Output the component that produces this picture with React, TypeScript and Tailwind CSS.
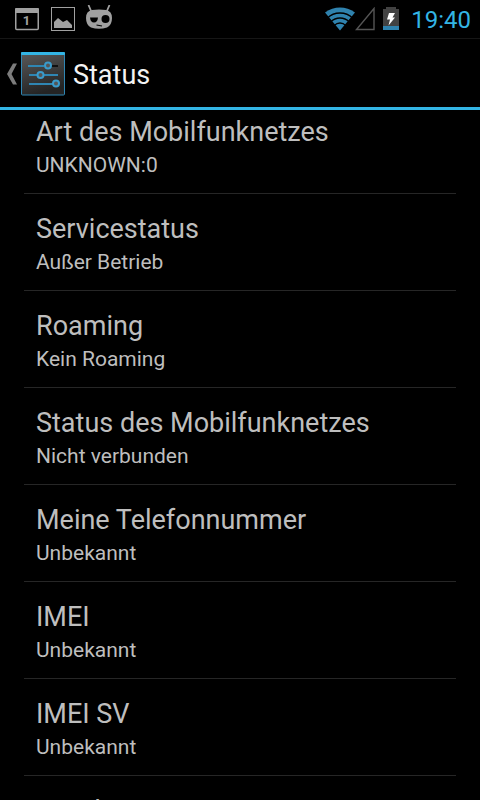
/* ============================================================
   Phone status screen
   Dark settings list with status bar and action bar
   ============================================================ */

const entries = [
  { title: "Art des Mobilfunknetzes", value: "UNKNOWN:0" },
  { title: "Servicestatus", value: "Außer Betrieb" },
  { title: "Roaming", value: "Kein Roaming" },
  { title: "Status des Mobilfunknetzes", value: "Nicht verbunden" },
  { title: "Meine Telefonnummer", value: "Unbekannt" },
  { title: "IMEI", value: "Unbekannt" },
  { title: "IMEI SV", value: "Unbekannt" },
  { title: "IP-Adresse", value: "Nicht verfügbar" },
];

function CalendarIcon() {
  return (
    <svg width="24" height="24" viewBox="0 0 24 24" aria-hidden="true">
      <rect x="0.750" y="2" width="22.500" height="20.500" rx="1" fill="none" stroke="#a0a0a0" strokeWidth="1.500" />
      <rect x="0" y="1" width="24" height="5" rx="1" fill="#a0a0a0" />
      <text x="11.500" y="18" textAnchor="middle" fontSize="13" fontWeight="700" fill="#a0a0a0">1</text>
    </svg>
  );
}

function PictureIcon() {
  return (
    <svg width="24" height="24" viewBox="0 0 24 24" aria-hidden="true">
      <rect x="0.500" y="0.500" width="23" height="23" fill="none" stroke="#a0a0a0" />
      <path d="M3 21V15L7 11L12 15L16 13L21 18V21Z" fill="#a0a0a0" />
    </svg>
  );
}

function MascotIcon() {
  return (
    <svg width="26" height="24" viewBox="0 0 26 24" aria-hidden="true">
      <path d="M2.500 0L5.500 7M23.500 0L20.500 7" stroke="#a0a0a0" strokeWidth="1.800" />
      <path d="M6 5Q13 4 20 5Q26 6 26 13Q26 20 21 22.500Q13 25 5 22.500Q0 20 0 13Q0 6 6 5Z" fill="#a0a0a0" />
      <path d="M4 12.500H12Q11.500 17.500 8 17.500Q4.500 17.500 4 12.500Z" fill="#000" />
      <circle cx="19.500" cy="14" r="4" fill="#000" />
      <path d="M10.500 20L16 21" stroke="#000" strokeWidth="1.200" />
    </svg>
  );
}

function WifiIcon() {
  return (
    <svg width="30" height="24" viewBox="0 0 30 24" aria-hidden="true">
      <path d="M15 0.500Q23 0.500 30 5.500L15 23.500L0 5.500Q7 0.500 15 0.500Z" fill="#2f82ae" />
      <g fill="none" stroke="#000" strokeWidth="1.300">
        <circle cx="15" cy="24" r="18" />
        <circle cx="15" cy="24" r="13" />
        <circle cx="15" cy="24" r="8" />
      </g>
    </svg>
  );
}

function SignalIcon() {
  return (
    <svg width="20" height="24" viewBox="0 0 20 24" aria-hidden="true">
      <path d="M19 1.500V22.500H1.500Z" fill="none" stroke="#555" strokeWidth="1.400" />
    </svg>
  );
}

function BatteryIcon() {
  return (
    <svg width="16" height="24" viewBox="0 0 16 24" aria-hidden="true">
      <path d="M3 0H13V2H16V19H0V2H3Z" fill="#424242" />
      <rect x="0" y="19" width="16" height="4" fill="#2f82ae" />
      <path d="M6 6H12L9.500 10.500H12L5.500 18.500L7 12.500H4Z" fill="#fff" />
    </svg>
  );
}

function BackIcon() {
  return (
    <svg width="10" height="22" viewBox="0 0 10 22" aria-hidden="true">
      <path d="M6 0.500H10L4.500 11L10 21.500H6L0 11Z" fill="#7c7c7c" />
    </svg>
  );
}

function SettingsIcon() {
  return (
    <svg width="44" height="44" viewBox="0 0 44 44" aria-hidden="true">
      <defs>
        <linearGradient id="plate" x1="0" y1="0" x2="0.300" y2="1">
          <stop offset="0" stopColor="#5a5a5a" />
          <stop offset="1" stopColor="#242424" />
        </linearGradient>
      </defs>
      <rect x="0.500" y="0.500" width="43" height="42.500" rx="1" fill="url(#plate)" stroke="#2f86b3" />
      <rect x="0" y="0" width="44" height="3" rx="1" fill="#33b5e5" />
      <g strokeWidth="2" stroke="#2f86b3">
        <path d="M7 14H23" />
        <path d="M30 14H37" stroke="#111" />
        <path d="M8 23H37" />
        <path d="M8 32H32" />
      </g>
      <g fill="#555" stroke="#3a9bcb" strokeWidth="2">
        <circle cx="27" cy="13.500" r="3" />
        <circle cx="19.500" cy="23" r="3" />
        <circle cx="35" cy="31.500" r="3" />
      </g>
    </svg>
  );
}

function StatusBar() {
  return (
    <div className="flex h-[38px] shrink-0 items-center justify-between pl-[15px] pr-[9px]">
      <div className="flex items-center">
        <CalendarIcon />
        <div className="ml-3 mr-[11px]">
          <PictureIcon />
        </div>
        <div className="pb-1">
          <MascotIcon />
        </div>
      </div>
      <div className="flex items-center">
        <WifiIcon />
        <SignalIcon />
        <div className="ml-2 mr-3">
          <BatteryIcon />
        </div>
        <time className="pt-0.5 text-[24px] leading-7 text-[#33b5e5]">19:40</time>
      </div>
    </div>
  );
}

function ActionBar() {
  return (
    <header className="flex h-[72px] shrink-0 items-center border-t border-b-3 border-t-[#161616] border-b-[#33b5e5] pt-0.5 pl-[7px]">
      <button type="button" aria-label="Zurück" className="flex items-center gap-1">
        <BackIcon />
        <SettingsIcon />
      </button>
      <h1 className="ml-2 pt-0.5 text-[27px] leading-8 text-[#f3f3f3]">Status</h1>
    </header>
  );
}

export default function App() {
  return (
    <div className="flex h-screen flex-col overflow-hidden bg-black font-['Roboto',sans-serif]">
      <StatusBar />
      <ActionBar />
      <main className="min-h-0 flex-1 overflow-hidden px-6">
        {/* list is scrolled a little way under the action bar */}
        <dl className="-mt-[13px]">
          {entries.map((entry) => (
            <div key={entry.title} className="border-b border-[#262626] px-3 pt-[19px] pb-[15px]">
              <dt className="text-[27px] leading-8 text-[#bebebe]">{entry.title}</dt>
              <dd className="mt-[5px] text-[21px] leading-[25px] text-[#bebebe]">{entry.value}</dd>
            </div>
          ))}
        </dl>
      </main>
    </div>
  );
}
